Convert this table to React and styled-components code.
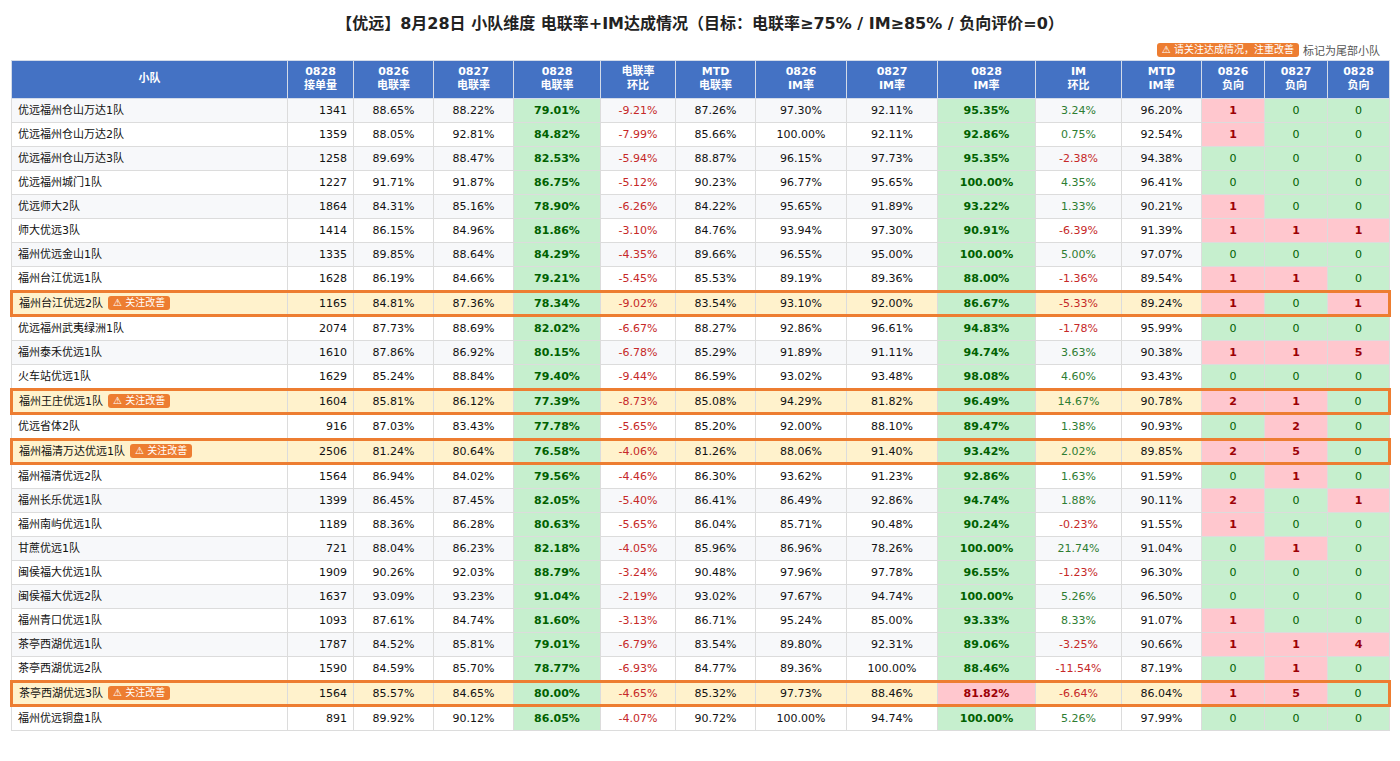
import React from "react";
import styled, { createGlobalStyle } from "styled-components";

const GlobalStyle = createGlobalStyle`
	body {
		margin: 0;
		background: #ffffff;
		font-family: "DejaVu Sans", "Noto Sans CJK SC", sans-serif;
		color: #222;
	}
`;

const Page = styled.div`
	padding: 12px 10px 20px 10px;
`;

const Title = styled.h2`
	margin: 0;
	font-size: 16px;
	line-height: 24px;
	font-weight: bold;
	text-align: center;
	color: #222;
`;

const Legend = styled.div`
	display: flex;
	justify-content: flex-end;
	align-items: center;
	gap: 4px;
	height: 18px;
	margin: 5px 0 1px 0;
	padding-right: 10px;
`;

const Badge = styled.span`
	display: inline-block;
	background-color: #ed7d31;
	color: #fff;
	font-size: 10px;
	line-height: 14px;
	height: 14px;
	padding: 0 5px;
	border-radius: 3px;
	white-space: nowrap;
	margin-left: ${(props) => (props.$inline ? "5px" : "0")};
	vertical-align: top;
`;

const LegendText = styled.span`
	font-size: 11px;
	color: #555;
`;

const Table = styled.table`
	width: 100%;
	border-collapse: collapse;
	table-layout: fixed;
	font-size: 11px;
`;

const HeadCell = styled.th`
	background-color: #4472c4;
	color: #fff;
	font-weight: bold;
	font-size: 11px;
	line-height: 14px;
	padding: 4px 3px 5px 3px;
	border: 1px solid #d3dbe9;
	text-align: center;
`;

const Row = styled.tr`
	background-color: ${(props) =>
		props.$flag ? "#fff2cc" : props.$odd ? "#f7f8fa" : "#ffffff"};
`;

const toneBg = {
	good: "#c6efce",
	bad: "#ffc7ce",
};

const toneText = {
	good: "#006100",
	bad: "#9c0006",
	up: "#2e7d32",
	down: "#c62828",
};

const Cell = styled.td`
	padding: ${(props) => (props.$flag ? "3px 6px" : "4px 6px")};
	line-height: 15px;
	height: 15px;
	border: 1px solid #dcdcdc;
	text-align: ${(props) => props.$align || "center"};
	white-space: nowrap;
	overflow: hidden;
	background-color: ${(props) => toneBg[props.$tone] || "transparent"};
	color: ${(props) => toneText[props.$tone] || "#111"};
	font-weight: ${(props) => (props.$bold ? "bold" : "normal")};
	${(props) =>
		props.$flag &&
		`
		border-top: 3px solid #ed7d31;
		border-bottom: 3px solid #ed7d31;
	`}
	${(props) => props.$flag && props.$first && `border-left: 3px solid #ed7d31;`}
	${(props) => props.$flag && props.$last && `border-right: 3px solid #ed7d31;`}
`;

const widths = [276, 66, 80, 80, 87, 75, 80, 91, 91, 98, 86, 80, 63, 63, 62];

const heads = [
	["小队"],
	["0828", "接单量"],
	["0826", "电联率"],
	["0827", "电联率"],
	["0828", "电联率"],
	["电联率", "环比"],
	["MTD", "电联率"],
	["0826", "IM率"],
	["0827", "IM率"],
	["0828", "IM率"],
	["IM", "环比"],
	["MTD", "IM率"],
	["0826", "负向"],
	["0827", "负向"],
	["0828", "负向"],
];

// 小队, 接单量, 0826/0827/0828电联率, 环比, MTD, 0826/0827/0828 IM, 环比, MTD, 负向x3, 尾部
const rows = [
	["优远福州仓山万达1队", 1341, 88.65, 88.22, 79.01, -9.21, 87.26, 97.3, 92.11, 95.35, 3.24, 96.2, 1, 0, 0],
	["优远福州仓山万达2队", 1359, 88.05, 92.81, 84.82, -7.99, 85.66, 100, 92.11, 92.86, 0.75, 92.54, 1, 0, 0],
	["优远福州仓山万达3队", 1258, 89.69, 88.47, 82.53, -5.94, 88.87, 96.15, 97.73, 95.35, -2.38, 94.38, 0, 0, 0],
	["优远福州城门1队", 1227, 91.71, 91.87, 86.75, -5.12, 90.23, 96.77, 95.65, 100, 4.35, 96.41, 0, 0, 0],
	["优远师大2队", 1864, 84.31, 85.16, 78.9, -6.26, 84.22, 95.65, 91.89, 93.22, 1.33, 90.21, 1, 0, 0],
	["师大优远3队", 1414, 86.15, 84.96, 81.86, -3.1, 84.76, 93.94, 97.3, 90.91, -6.39, 91.39, 1, 1, 1],
	["福州优远金山1队", 1335, 89.85, 88.64, 84.29, -4.35, 89.66, 96.55, 95.0, 100, 5.0, 97.07, 0, 0, 0],
	["福州台江优远1队", 1628, 86.19, 84.66, 79.21, -5.45, 85.53, 89.19, 89.36, 88.0, -1.36, 89.54, 1, 1, 0],
	["福州台江优远2队", 1165, 84.81, 87.36, 78.34, -9.02, 83.54, 93.1, 92.0, 86.67, -5.33, 89.24, 1, 0, 1, true],
	["优远福州武夷绿洲1队", 2074, 87.73, 88.69, 82.02, -6.67, 88.27, 92.86, 96.61, 94.83, -1.78, 95.99, 0, 0, 0],
	["福州泰禾优远1队", 1610, 87.86, 86.92, 80.15, -6.78, 85.29, 91.89, 91.11, 94.74, 3.63, 90.38, 1, 1, 5],
	["火车站优远1队", 1629, 85.24, 88.84, 79.4, -9.44, 86.59, 93.02, 93.48, 98.08, 4.6, 93.43, 0, 0, 0],
	["福州王庄优远1队", 1604, 85.81, 86.12, 77.39, -8.73, 85.08, 94.29, 81.82, 96.49, 14.67, 90.78, 2, 1, 0, true],
	["优远省体2队", 916, 87.03, 83.43, 77.78, -5.65, 85.2, 92.0, 88.1, 89.47, 1.38, 90.93, 0, 2, 0],
	["福州福清万达优远1队", 2506, 81.24, 80.64, 76.58, -4.06, 81.26, 88.06, 91.4, 93.42, 2.02, 89.85, 2, 5, 0, true],
	["福州福清优远2队", 1564, 86.94, 84.02, 79.56, -4.46, 86.3, 93.62, 91.23, 92.86, 1.63, 91.59, 0, 1, 0],
	["福州长乐优远1队", 1399, 86.45, 87.45, 82.05, -5.4, 86.41, 86.49, 92.86, 94.74, 1.88, 90.11, 2, 0, 1],
	["福州南屿优远1队", 1189, 88.36, 86.28, 80.63, -5.65, 86.04, 85.71, 90.48, 90.24, -0.23, 91.55, 1, 0, 0],
	["甘蔗优远1队", 721, 88.04, 86.23, 82.18, -4.05, 85.96, 86.96, 78.26, 100, 21.74, 91.04, 0, 1, 0],
	["闽侯福大优远1队", 1909, 90.26, 92.03, 88.79, -3.24, 90.48, 97.96, 97.78, 96.55, -1.23, 96.3, 0, 0, 0],
	["闽侯福大优远2队", 1637, 93.09, 93.23, 91.04, -2.19, 93.02, 97.67, 94.74, 100, 5.26, 96.5, 0, 0, 0],
	["福州青口优远1队", 1093, 87.61, 84.74, 81.6, -3.13, 86.71, 95.24, 85.0, 93.33, 8.33, 91.07, 1, 0, 0],
	["茶亭西湖优远1队", 1787, 84.52, 85.81, 79.01, -6.79, 83.54, 89.8, 92.31, 89.06, -3.25, 90.66, 1, 1, 4],
	["茶亭西湖优远2队", 1590, 84.59, 85.7, 78.77, -6.93, 84.77, 89.36, 100, 88.46, -11.54, 87.19, 0, 1, 0],
	["茶亭西湖优远3队", 1564, 85.57, 84.65, 80.0, -4.65, 85.32, 97.73, 88.46, 81.82, -6.64, 86.04, 1, 5, 0, true],
	["福州优远铜盘1队", 891, 89.92, 90.12, 86.05, -4.07, 90.72, 100, 94.74, 100, 5.26, 97.99, 0, 0, 0],
];

const pct = (v) => v.toFixed(2) + "%";

function TeamRow({ data, index }) {
	const [name, orders, r26, r27, r28, rHb, rMtd, i26, i27, i28, iHb, iMtd, n26, n27, n28, flag] = data;
	const f = !!flag;

	const trend = (v) => (v < 0 ? "down" : "up");
	const neg = (v) => ({ $tone: v > 0 ? "bad" : "good", $bold: v > 0 });

	const cells = [
		{ v: pct(r26) },
		{ v: pct(r27) },
		{ v: pct(r28), $tone: r28 >= 75 ? "good" : "bad", $bold: true },
		{ v: pct(rHb), $tone: trend(rHb) },
		{ v: pct(rMtd) },
		{ v: pct(i26) },
		{ v: pct(i27) },
		{ v: pct(i28), $tone: i28 >= 85 ? "good" : "bad", $bold: true },
		{ v: pct(iHb), $tone: trend(iHb) },
		{ v: pct(iMtd) },
		{ v: n26, ...neg(n26) },
		{ v: n27, ...neg(n27) },
		{ v: n28, ...neg(n28) },
	];

	return (
		<Row $odd={index % 2 === 0} $flag={f}>
			<Cell $align="left" $flag={f} $first>
				{name}
				{f && <Badge $inline>⚠ 关注改善</Badge>}
			</Cell>
			<Cell $align="right" $flag={f}>
				{orders}
			</Cell>
			{cells.map((c, i) => (
				<Cell key={i} $tone={c.$tone} $bold={c.$bold} $flag={f} $last={i === cells.length - 1}>
					{c.v}
				</Cell>
			))}
		</Row>
	);
}

export default function App() {
	return (
		<>
			<GlobalStyle />
			<Page>
				<Title>【优远】8月28日 小队维度 电联率+IM达成情况（目标：电联率≥75% / IM≥85% / 负向评价=0）</Title>
				<Legend>
					<Badge>⚠ 请关注达成情况，注重改善</Badge>
					<LegendText>标记为尾部小队</LegendText>
				</Legend>
				<Table>
					<colgroup>
						{widths.map((w, i) => (
							<col key={i} style={{ width: w }} />
						))}
					</colgroup>
					<thead>
						<tr>
							{heads.map((h, i) => (
								<HeadCell key={i}>
									{h.map((line, j) => (
										<div key={j}>{line}</div>
									))}
								</HeadCell>
							))}
						</tr>
					</thead>
					<tbody>
						{rows.map((r, i) => (
							<TeamRow key={r[0]} data={r} index={i} />
						))}
					</tbody>
				</Table>
			</Page>
		</>
	);
}
